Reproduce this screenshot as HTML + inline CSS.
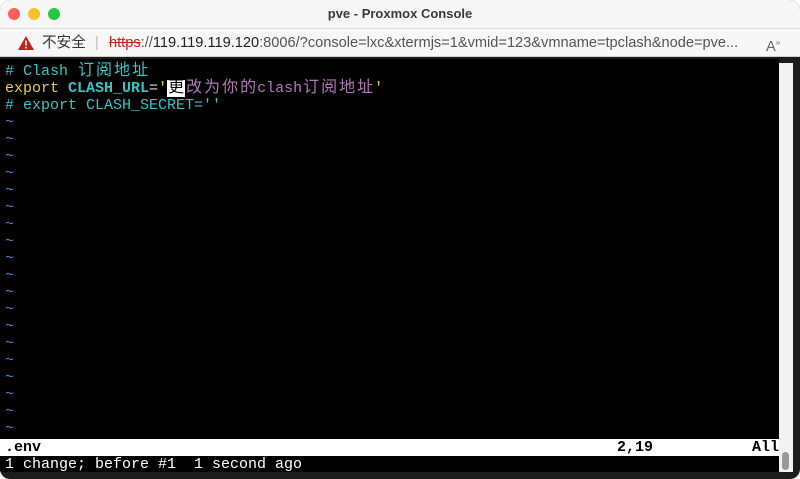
<!DOCTYPE html>
<html><head><meta charset="utf-8"><style>
html,body{margin:0;padding:0;width:800px;height:479px;overflow:hidden;background:#fff;font-family:"Liberation Sans","Noto Sans CJK SC",sans-serif}
.win{position:absolute;left:0;top:0;width:800px;height:479px;border-radius:10px;overflow:hidden;background:#1c1c1c}
.title{position:absolute;left:0;top:0;width:800px;height:28px;background:#f6f6f6;border-bottom:1px solid #dcdcdc;text-align:center;font-size:13px;font-weight:bold;color:#3a3a3a;line-height:28px}
.dot{position:absolute;top:8px;width:12px;height:12px;border-radius:50%}
.addr{position:absolute;left:0;top:29px;width:800px;height:27px;background:#f7f7f7;border-bottom:1px solid #cfcfcf;font-size:14.6px;color:#555;line-height:28px}
.term{position:absolute;left:0;top:59px;width:779px;height:413px;background:#000;font-family:"Liberation Mono","Noto Sans CJK SC",monospace;font-size:15px;line-height:17px}
.l{position:absolute;left:5px;white-space:pre;height:17px}
.c{color:#2ec8c8}.y{color:#e8d22a}.p{color:#b277b8}.t{color:#4f84d0}
.k{display:inline-block;width:18px;text-align:center;font-size:16px}
.sb{position:absolute;left:779px;top:63px;width:14px;height:409px;background:#f2f2f2}
</style></head><body>
<div class="win">
<div class="title">pve - Proxmox Console
<div class="dot" style="left:8px;background:#fe5f57"></div>
<div class="dot" style="left:28px;background:#febc2e"></div>
<div class="dot" style="left:48px;background:#28c840"></div>
</div>
<div class="addr">
<svg style="position:absolute;left:17px;top:6px" width="18" height="16" viewBox="0 0 18 16"><path d="M9 1L17 15H1Z" fill="#c4221a"/><rect x="8.2" y="5.5" width="1.6" height="5" fill="#fff"/><rect x="8.2" y="11.8" width="1.6" height="1.6" fill="#fff"/></svg>
<span style="position:absolute;left:42px;color:#333">不安全</span>
<span style="position:absolute;left:95px;top:0;color:#bbb">|</span>
<span style="position:absolute;left:109px;white-space:nowrap"><span style="color:#c4221a;text-decoration:line-through">https</span>://<span style="color:#222">119.119.119.120</span>:8006/?console=lxc&amp;xtermjs=1&amp;vmid=123&amp;vmname=tpclash&amp;node=pve...</span>
<span style="position:absolute;left:766px;color:#666">A<sup style="font-size:8px">»</sup></span>
</div>
<div class="term">
<div class="l c" style="top:4px"># Clash <span class="k">订</span><span class="k">阅</span><span class="k">地</span><span class="k">址</span></div>
<div class="l" style="top:21px"><span class="y">export</span> <b class="c">CLASH_URL</b><span style="color:#ddd">=</span><span class="y">'</span><span class="k" style="background:#fff;color:#000">更</span><span class="p"><span class="k">改</span><span class="k">为</span><span class="k">你</span><span class="k">的</span>clash<span class="k">订</span><span class="k">阅</span><span class="k">地</span><span class="k">址</span></span><span class="y">'</span></div>
<div class="l c" style="top:38px"># export CLASH_SECRET=''</div>
<div class="l t" style="top:55px">~
~
~
~
~
~
~
~
~
~
~
~
~
~
~
~
~
~
~</div>
<div style="position:absolute;left:0;top:380px;width:779px;height:17px;background:#fff;color:#000;font-weight:bold;white-space:pre"><span style="position:absolute;left:5px">.env</span><span style="position:absolute;left:617px">2,19</span><span style="position:absolute;left:752px">All</span></div>
<div class="l" style="top:397px;color:#fff">1 change; before #1  1 second ago</div>
</div>
<div class="sb"><div style="position:absolute;left:3px;top:389px;width:7px;height:18px;border-radius:4px;background:#999"></div></div>
</div>
</body></html>
